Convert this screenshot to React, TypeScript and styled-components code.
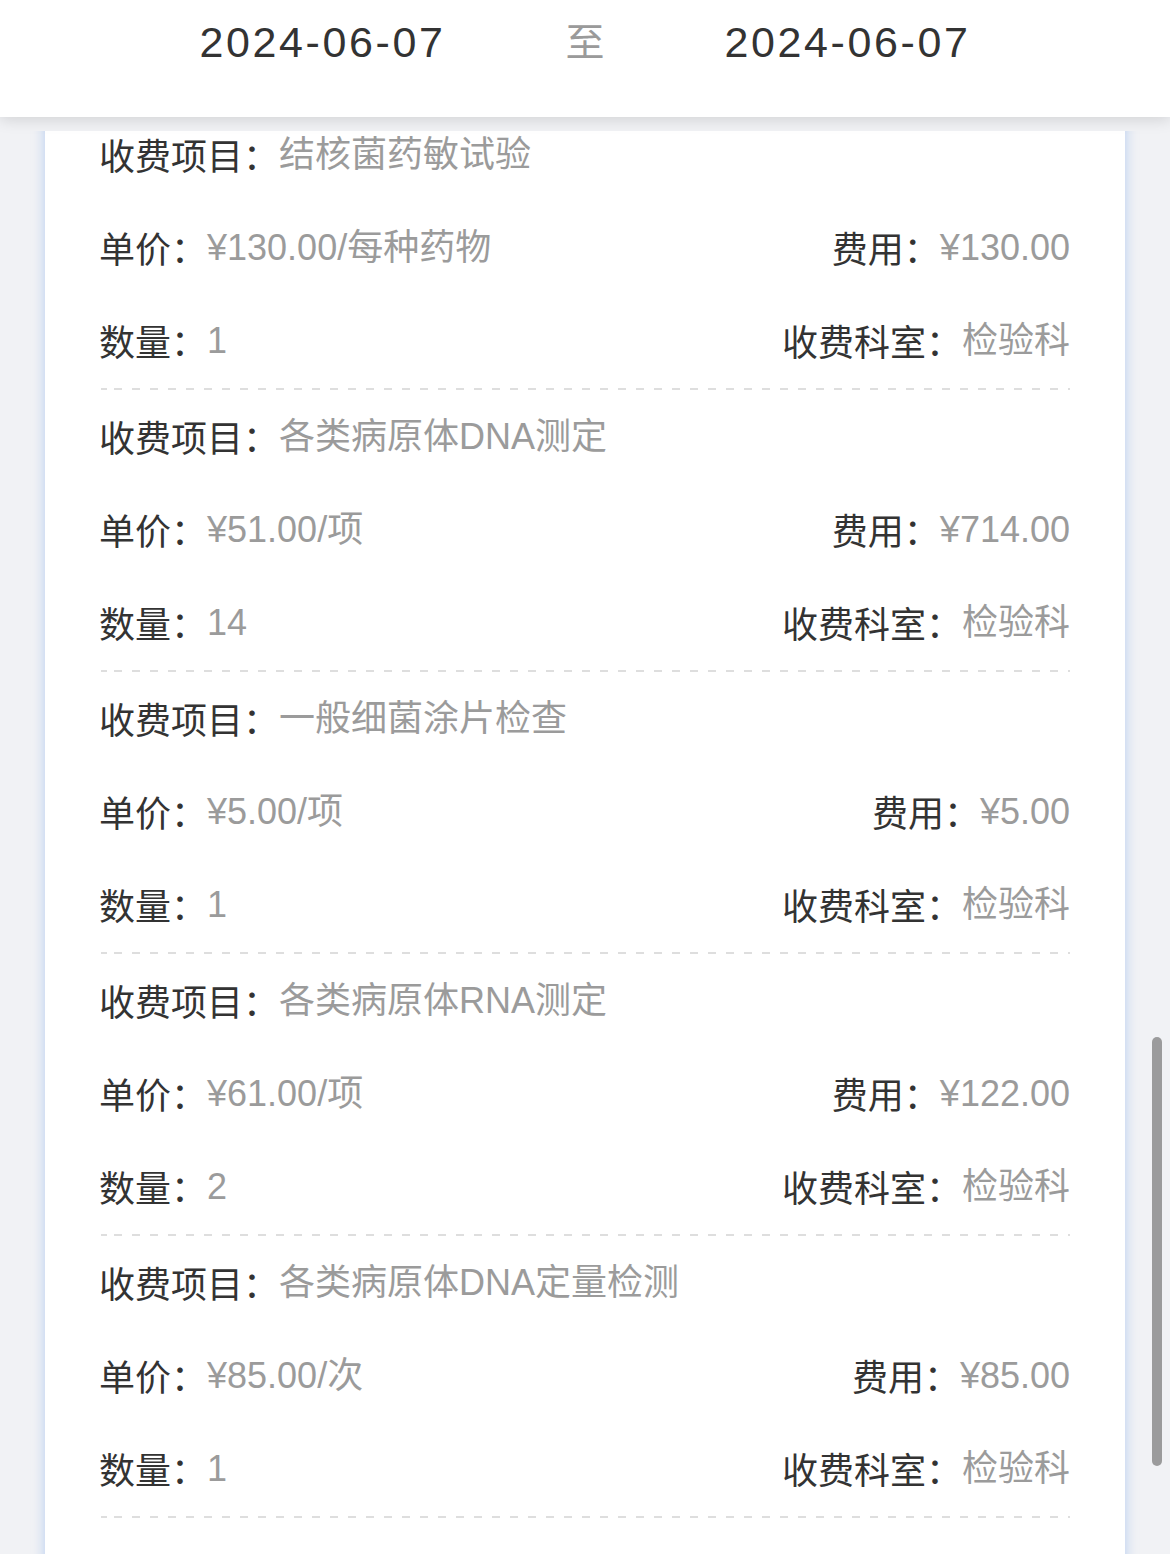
import React, { useLayoutEffect, useRef } from "react";
import styled, { createGlobalStyle } from "styled-components";

const GlobalStyle = createGlobalStyle`
  html, body {
    margin: 0;
    padding: 0;
    background: #f1f2f5;
    font-family: "Liberation Sans", "Noto Sans CJK SC", sans-serif;
  }
  * { box-sizing: border-box; }
`;

const Page = styled.div`
  position: relative;
  width: 1170px;
  height: 1554px;
  overflow: hidden;
  background: #f1f2f5;
`;

const Header = styled.header`
  position: relative;
  z-index: 2;
  height: 117px;
  background: #ffffff;
  box-shadow: 0 3px 14px rgba(0, 0, 0, 0.13);
  display: flex;
  justify-content: center;
  align-items: flex-start;
  gap: 120px;
  padding-top: 16px;
`;

const DateText = styled.span`
  font-family: "Liberation Sans", "Noto Sans CJK SC", sans-serif;
  font-size: 43px;
  line-height: 52px;
  letter-spacing: 2.6px;
  color: #333333;
`;

const ToText = styled.span`
  font-family: "Noto Sans CJK SC", sans-serif;
  font-size: 39px;
  line-height: 46px;
  color: #9a9a9a;
`;

const ScrollArea = styled.div`
  position: relative;
  z-index: 1;
  margin-top: 14px;
  height: 1423px;
  overflow: hidden;
  padding: 0 45px;
`;

const Card = styled.section`
  background: #ffffff;
  box-shadow: 0 0 12px rgba(110, 160, 235, 0.45);
  padding: 0 55px 200px 54px;
`;

const Item = styled.div`
  display: flex;
  flex-direction: column;
`;

const Row = styled.div`
  height: 93px;
  line-height: 93px;
  display: flex;
  justify-content: space-between;
  font-size: 36px;
  white-space: nowrap;
`;

const Field = styled.span`
  display: inline-flex;
`;

const Label = styled.span`
  color: #333333;
  font-family: "Noto Sans CJK SC", sans-serif;
`;

const Value = styled.span`
  color: #9b9b9b;
  font-family: "Liberation Sans", "Noto Sans CJK SC", sans-serif;
`;

const Divider = styled.div`
  margin-top: 1px;
  margin-left: 2px;
  height: 2px;
  background-image: repeating-linear-gradient(
    to right,
    #dedede 0,
    #dedede 8px,
    transparent 8px,
    transparent 18px
  );
  background-position: 13px 0;
`;

const ScrollIndicator = styled.div`
  position: absolute;
  z-index: 3;
  right: 8px;
  top: 1037px;
  width: 10px;
  height: 429px;
  border-radius: 5px;
  background: #9b9b9c;
`;

type Fee = {
  name: string;
  price: string;
  total: string;
  qty: string;
  dept: string;
};

const fees: Fee[] = [
  { name: "结核菌药敏试验", price: "¥130.00/每种药物", total: "¥130.00", qty: "1", dept: "检验科" },
  { name: "各类病原体DNA测定", price: "¥51.00/项", total: "¥714.00", qty: "14", dept: "检验科" },
  { name: "一般细菌涂片检查", price: "¥5.00/项", total: "¥5.00", qty: "1", dept: "检验科" },
  { name: "各类病原体RNA测定", price: "¥61.00/项", total: "¥122.00", qty: "2", dept: "检验科" },
  { name: "各类病原体DNA定量检测", price: "¥85.00/次", total: "¥85.00", qty: "1", dept: "检验科" },
];

const FeeItem: React.FC<{ fee: Fee }> = ({ fee }) => (
  <Item>
    <Row>
      <Field>
        <Label>收费项目：</Label>
        <Value>{fee.name}</Value>
      </Field>
    </Row>
    <Row>
      <Field>
        <Label>单价：</Label>
        <Value>{fee.price}</Value>
      </Field>
      <Field>
        <Label>费用：</Label>
        <Value>{fee.total}</Value>
      </Field>
    </Row>
    <Row>
      <Field>
        <Label>数量：</Label>
        <Value>{fee.qty}</Value>
      </Field>
      <Field>
        <Label>收费科室：</Label>
        <Value>{fee.dept}</Value>
      </Field>
    </Row>
    <Divider />
  </Item>
);

export default function App() {
  const scrollRef = useRef<HTMLDivElement>(null);

  useLayoutEffect(() => {
    if (scrollRef.current) {
      scrollRef.current.scrollTop = 23;
    }
  }, []);

  return (
    <>
      <GlobalStyle />
      <Page>
        <Header>
          <DateText>2024-06-07</DateText>
          <ToText>至</ToText>
          <DateText>2024-06-07</DateText>
        </Header>
        <ScrollArea ref={scrollRef}>
          <Card>
            {fees.map((fee, i) => (
              <FeeItem key={i} fee={fee} />
            ))}
          </Card>
        </ScrollArea>
        <ScrollIndicator />
      </Page>
    </>
  );
}
